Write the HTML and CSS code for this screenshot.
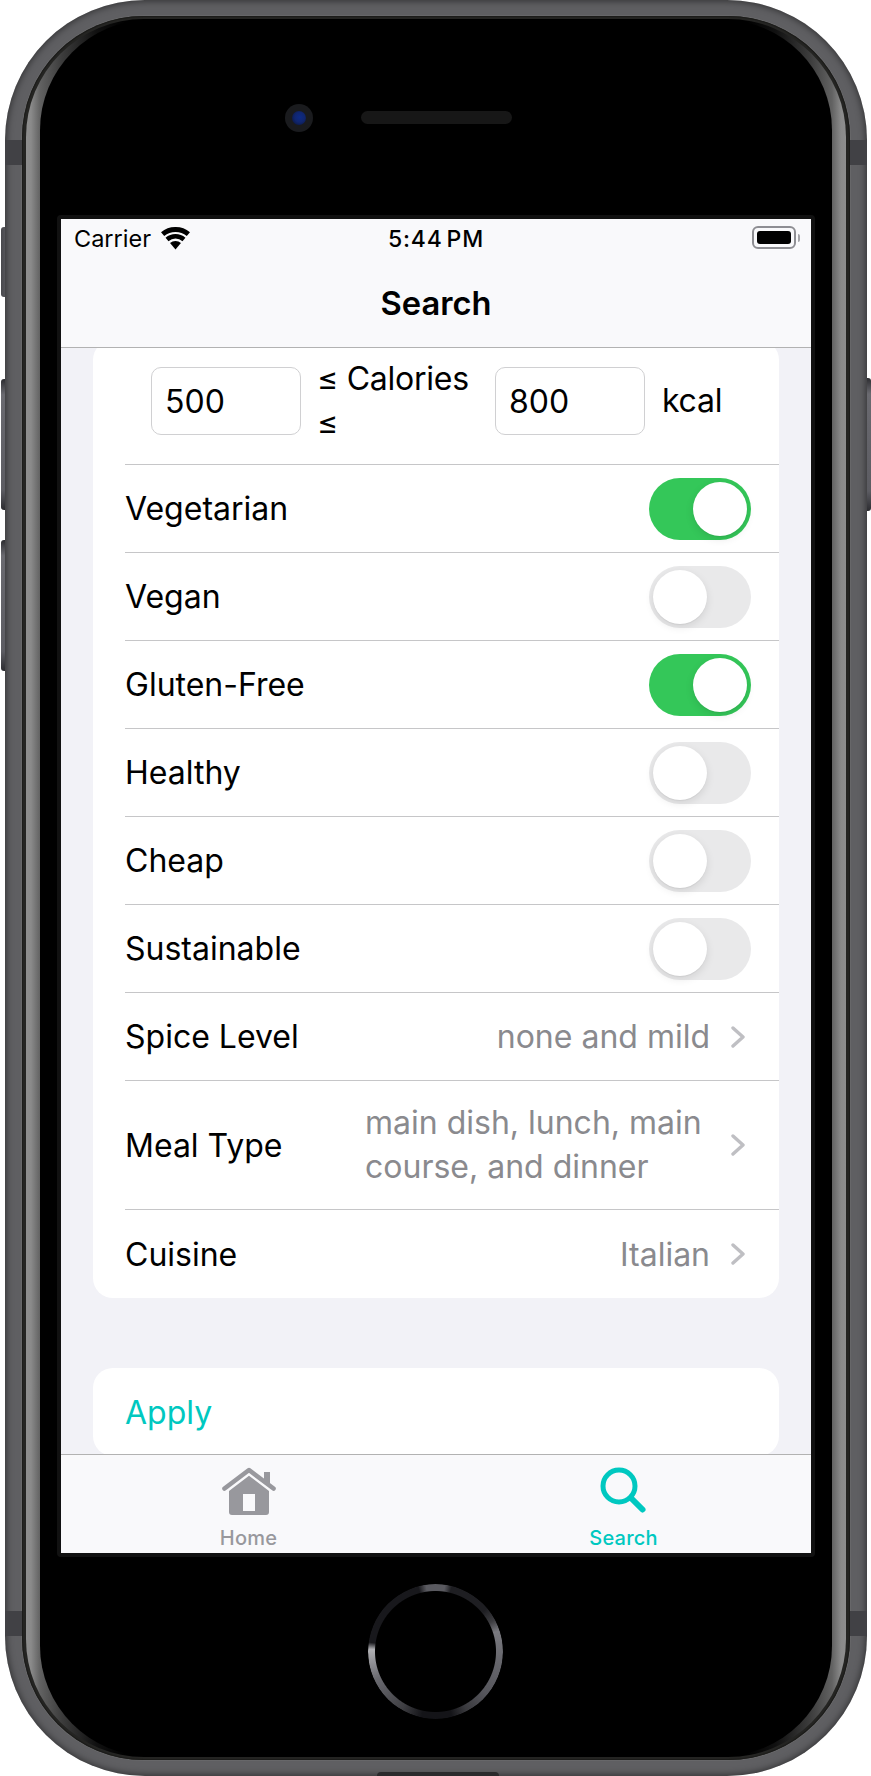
FILE: index.html
```html
<!DOCTYPE html>
<html lang="en">
<head>
<meta charset="utf-8">
<title>Search</title>
<link rel="stylesheet" href="styles.css">
</head>
<body>
<div class="device">
  <span class="side-btn mute"></span>
  <span class="side-btn vol-up"></span>
  <span class="side-btn vol-down"></span>
  <span class="side-btn power"></span>
  <div class="shell">
    <span class="band band-tl"></span>
    <span class="band band-tr"></span>
    <span class="band band-bl"></span>
    <span class="band band-br"></span>
    <span class="notch"></span>
    <div class="ring">
      <div class="bezel">
        <div class="face">
          <div class="earpiece-row">
            <div class="camera"><span class="lens"></span></div>
            <div class="speaker"></div>
          </div>
          <div class="screen-frame">
            <div class="screen">
              <div class="top-bars">
                <div class="status-bar">
                  <div class="status-left">
                    <span class="carrier">Carrier</span>
                    <svg class="wifi" viewBox="0 0 29 23" width="29" height="23">
                      <path d="M1.64 7.18A20 20 0 0 1 27.36 7.18" fill="none" stroke="#000" stroke-width="5"/>
                      <path d="M6.02 12.39A13.2 13.2 0 0 1 22.98 12.39" fill="none" stroke="#000" stroke-width="4.6"/>
                      <path d="M14.5 22.5L9.04 15.99A8.5 8.5 0 0 1 19.96 15.99Z" fill="#000"/>
                    </svg>
                  </div>
                  <span class="time">5:44 PM</span>
                  <div class="status-right">
                    <div class="battery"><span class="battery-fill"></span></div>
                    <span class="battery-nub"></span>
                  </div>
                </div>
                <div class="nav-bar">Search</div>
              </div>
              <div class="content">
                <div class="card filters">
                  <div class="row calories">
                    <div class="field">500</div>
                    <div class="cal-label">≤ Calories ≤</div>
                    <div class="field">800</div>
                    <div class="unit">kcal</div>
                  </div>
                  <div class="row"><span>Vegetarian</span><span class="switch on"><i class="knob"></i></span></div>
                  <div class="row"><span>Vegan</span><span class="switch"><i class="knob"></i></span></div>
                  <div class="row"><span>Gluten-Free</span><span class="switch on"><i class="knob"></i></span></div>
                  <div class="row"><span>Healthy</span><span class="switch"><i class="knob"></i></span></div>
                  <div class="row"><span>Cheap</span><span class="switch"><i class="knob"></i></span></div>
                  <div class="row"><span>Sustainable</span><span class="switch"><i class="knob"></i></span></div>
                  <div class="row link">
                    <span>Spice Level</span>
                    <span class="value">none and mild</span>
                    <svg class="chev" viewBox="0 0 14 22" width="14" height="22"><path d="M2 2L12 11L2 20" fill="none" stroke="#bfbfc3" stroke-width="3.4" stroke-linecap="round" stroke-linejoin="round"/></svg>
                  </div>
                  <div class="row link tall">
                    <span>Meal Type</span>
                    <span class="value multi">main dish, lunch, main course, and dinner</span>
                    <svg class="chev" viewBox="0 0 14 22" width="14" height="22"><path d="M2 2L12 11L2 20" fill="none" stroke="#bfbfc3" stroke-width="3.4" stroke-linecap="round" stroke-linejoin="round"/></svg>
                  </div>
                  <div class="row link last">
                    <span>Cuisine</span>
                    <span class="value">Italian</span>
                    <svg class="chev" viewBox="0 0 14 22" width="14" height="22"><path d="M2 2L12 11L2 20" fill="none" stroke="#bfbfc3" stroke-width="3.4" stroke-linecap="round" stroke-linejoin="round"/></svg>
                  </div>
                </div>
                <div class="card apply">Apply</div>
              </div>
              <div class="tab-bar">
                <div class="tab">
                  <svg class="tab-icon" viewBox="0 0 54 48" width="54" height="48">
                    <path d="M2.5 21.5L27 3L51.5 21.5" fill="none" stroke="#98989d" stroke-width="4.6" stroke-linecap="round" stroke-linejoin="round"/>
                    <rect x="42" y="5" width="6" height="11" fill="#98989d"/>
                    <path fill-rule="evenodd" d="M7 24L27 8.8L47 24V45Q47 48 44 48H10Q7 48 7 45ZM21 27V44H33V27Z" fill="#98989d"/>
                  </svg>
                  <span class="tab-label">Home</span>
                </div>
                <div class="tab active">
                  <svg class="tab-icon" viewBox="0 0 48 48" width="48" height="48">
                    <circle cx="19" cy="19" r="16" fill="none" stroke="#00c8c0" stroke-width="5"/>
                    <path d="M31 31L42.5 42.5" stroke="#00c8c0" stroke-width="6" stroke-linecap="round"/>
                  </svg>
                  <span class="tab-label">Search</span>
                </div>
              </div>
            </div>
          </div>
          <div class="home-button"></div>
        </div>
      </div>
    </div>
  </div>
</div>
</body>
</html>
```
FILE: styles.css
```css
* { box-sizing: border-box; }
html, body { margin: 0; padding: 0; background: #fff; }
body { font-family: Inter, "Liberation Sans", sans-serif; color: #000; }

.device { position: relative; width: 871px; height: 1776px; overflow: hidden; }

.side-btn {
  position: absolute;
  width: 7px;
  border-radius: 3px 0 0 3px;
}
.mute { left: 1px; top: 227px; height: 70px; background: linear-gradient(90deg, #48484c, #55555a 60%, #3a3a3e); }
.vol-up { left: 1px; top: 379px; height: 131px; background: linear-gradient(180deg, #2c2c30 0, #6a6a70 12%, #5c5c62 85%, #2c2c30 100%); }
.vol-down { left: 1px; top: 540px; height: 131px; background: linear-gradient(180deg, #2c2c30 0, #6a6a70 12%, #5c5c62 85%, #2c2c30 100%); }
.power { right: 0; left: auto; top: 378px; height: 133px; border-radius: 0 3px 3px 0; background: linear-gradient(180deg, #2c2c30 0, #6a6a70 12%, #5c5c62 85%, #2c2c30 100%); }

.shell {
  position: relative;
  margin-left: 5px;
  width: 862px;
  height: 1776px;
  padding: 16px 17px;
  border-radius: 140px;
  background: #5f5f62;
  box-shadow: inset 0 0 7px 1px rgba(0, 0, 0, .5);
}
.band { position: absolute; width: 17px; height: 25px; background: #414145; }
.band-tl { left: 0; top: 140px; }
.band-tr { right: 0; top: 140px; }
.band-bl { left: 0; top: 1611px; }
.band-br { right: 0; top: 1611px; }
.notch {
  position: absolute;
  left: 372px;
  bottom: 0;
  width: 122px;
  height: 4px;
  border-radius: 6px 6px 0 0;
  background: #2a2a2c;
}

.ring {
  height: 100%;
  padding: 3px 4px;
  border-radius: 122px;
  background: #242422;
  box-shadow: inset 0 0 0 1px #1c1c1a, 0 0 0 1px rgba(120, 120, 120, .35);
}
.bezel {
  height: 100%;
  padding: 1px 14px;
  border-radius: 118px;
  background: linear-gradient(90deg, #8e8e8e 0, #8a8a8a 5px, #626262 14px, #3c3c3c 36px, #111 70px, #000 100px, #000 calc(100% - 100px), #111 calc(100% - 70px), #3c3c3c calc(100% - 36px), #626262 calc(100% - 14px), #8a8a8a calc(100% - 5px), #8e8e8e 100%);
}
.face {
  height: 100%;
  display: flex;
  flex-direction: column;
  border-radius: 110px;
  background: #000;
}

.earpiece-row {
  flex: 0 0 195px;
  display: flex;
  align-items: center;
  gap: 48px;
  padding-left: 245px;
}
.camera {
  width: 28px;
  height: 28px;
  display: flex;
  align-items: center;
  justify-content: center;
  border-radius: 50%;
  background: #1a1b1e;
}
.lens {
  width: 14px;
  height: 14px;
  border-radius: 50%;
  background: radial-gradient(circle at 55% 45%, #0d2a86 0, #10266f 45%, #0a1230 100%);
}
.speaker { width: 151px; height: 13px; border-radius: 7px; background: #171717; }

.screen-frame {
  margin-left: 17px;
  width: 758px;
  height: 1342px;
  padding: 4px;
  border-radius: 4px;
  background: #111;
}
.screen {
  height: 100%;
  display: flex;
  flex-direction: column;
  overflow: hidden;
  background: #f2f2f7;
}

.top-bars { flex: none; background: #f9f9fb; border-bottom: 1px solid #b2b2b2; }
.status-bar {
  height: 40px;
  display: flex;
  align-items: center;
  justify-content: space-between;
  position: relative;
  padding: 0 11px 0 13px;
}
.status-left { display: flex; align-items: center; gap: 10px; }
.carrier { font-size: 23.5px; line-height: 40px; }
.wifi { display: block; margin-top: -2px; }
.time {
  position: absolute;
  left: 0;
  right: 0;
  text-align: center;
  font-size: 23px;
  font-weight: 500;
  letter-spacing: .8px;
  word-spacing: -3px;
  line-height: 42px;
}
.status-right { display: flex; align-items: center; gap: 2px; margin-top: -3px; }
.battery {
  width: 44px;
  height: 23px;
  padding: 3px;
  border: 2px solid #8e8e93;
  border-radius: 6px;
}
.battery-fill { display: block; height: 100%; border-radius: 3px; background: #000; }
.battery-nub { width: 2px; height: 8px; border-radius: 0 2px 2px 0; background: #a5a5a9; }
.nav-bar {
  height: 88px;
  font-size: 32.7px;
  font-weight: 600;
  line-height: 88px;
  text-align: center;
}

.content {
  flex: 1;
  min-height: 0;
  overflow: hidden;
  display: flex;
  flex-direction: column;
  gap: 70px;
  padding: 0 32px;
}
.card {
  flex: none;
  background: #fff;
  border-radius: 20px;
  font-size: 32px;
}
.filters { margin-top: -8px; }

.row {
  margin-left: 32px;
  height: 88px;
  display: flex;
  align-items: center;
  justify-content: space-between;
  padding-right: 28px;
  border-bottom: 1px solid #c6c6c8;
}
.row.calories {
  height: 125px;
  justify-content: flex-start;
  padding: 0 0 2px 26px;
  gap: 17px;
}
.field {
  flex: none;
  width: 150px;
  height: 68px;
  padding-left: 13px;
  border: 1px solid #d0d0d2;
  border-radius: 10px;
  line-height: 68px;
}
.cal-label { flex: none; width: 160px; line-height: 44px; padding-bottom: 1px; margin-left: -1px; margin-right: 1px; letter-spacing: -.25px; }
.unit { padding-bottom: 2px; letter-spacing: -.25px; }

.switch {
  position: relative;
  flex: none;
  width: 102px;
  height: 62px;
  padding: 4px;
  border-radius: 31px;
  background: #e9e9ea;
  display: flex;
  justify-content: flex-start;
}
.switch.on { background: #34c759; justify-content: flex-end; }
.knob {
  display: block;
  width: 54px;
  height: 54px;
  border-radius: 50%;
  background: #fff;
  box-shadow: 0 1px 1px rgba(0, 0, 0, .05), 0 3px 8px rgba(0, 0, 0, .1);
}

.row.link { padding-right: 34px; }
.value { margin-left: auto; color: #8a8a8e; }
.value.multi { width: 345px; flex: none; line-height: 44px; }
.chev { flex: none; margin-left: 21px; display: block; }
.row.tall { height: 129px; }
.row.last { height: 88px; border-bottom: 0; }

.apply {
  height: 88px;
  padding-left: 32px;
  line-height: 90px;
  color: #00c8c0;
}

.tab-bar {
  flex: none;
  height: 99px;
  display: flex;
  background: #f9f9fb;
  border-top: 1px solid #b2b2b2;
}
.tab {
  flex: 1;
  display: flex;
  flex-direction: column;
  align-items: center;
  padding-top: 12px;
  color: #98989d;
}
.tab.active { color: #00c8c0; }
.tab-icon { display: block; flex: none; }
.tab-label { margin-top: 11px; font-size: 20px; line-height: 25px; font-weight: 500; letter-spacing: .2px; }

.home-button {
  flex: none;
  align-self: flex-start;
  margin: 27px 0 0 328px;
  width: 135px;
  height: 135px;
  border-radius: 50%;
  background: conic-gradient(#5a5a60 0deg, #5a5a60 8deg, #1e1e22 14deg, #1e1e22 50deg, #3c3c40 62deg, #7a7a80 72deg, #66666c 100deg, #56565c 130deg, #3a3a3e 152deg, #141418 166deg, #141418 192deg, #3e3e42 210deg, #6a6a70 245deg, #b0b0b4 272deg, #18181c 278deg, #18181c 345deg, #5a5a60 352deg);
  -webkit-mask: radial-gradient(closest-side, transparent 60px, #000 61px);
  mask: radial-gradient(closest-side, transparent 60px, #000 61px);
}
```
